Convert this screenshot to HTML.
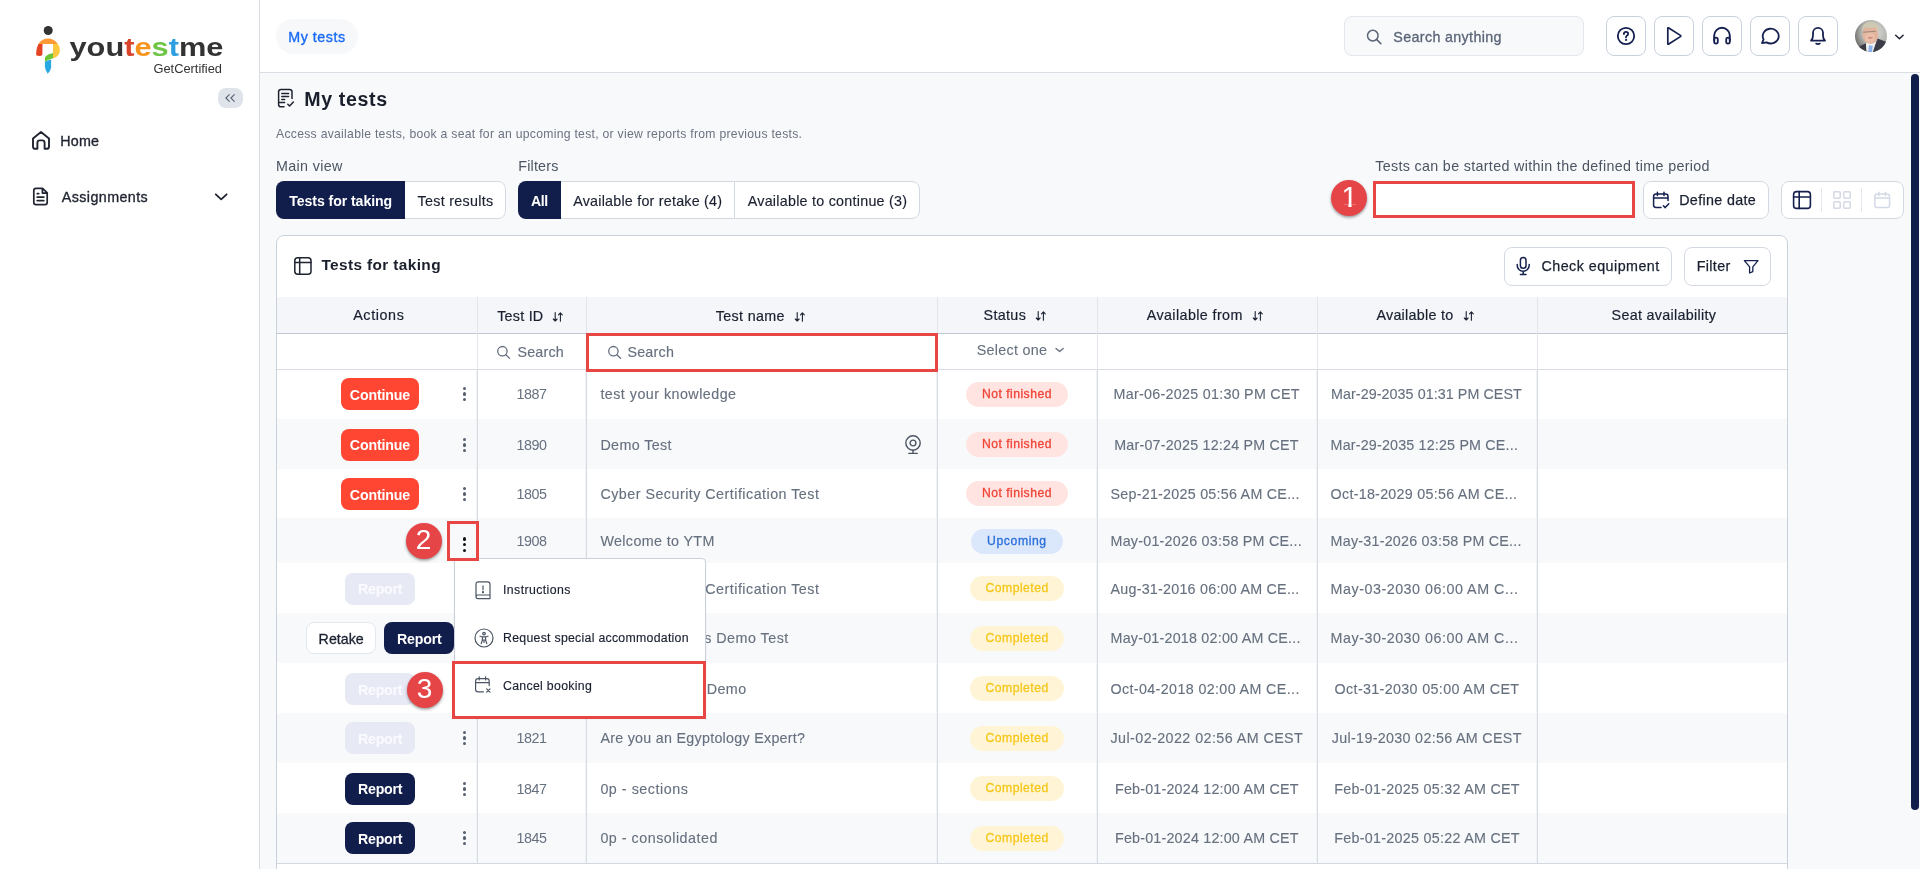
<!DOCTYPE html>
<html lang="en">
<head>
<meta charset="utf-8">
<title>My tests</title>
<style>
*{box-sizing:border-box;margin:0;padding:0}
html,body{width:1920px;height:869px;overflow:hidden;background:#f8f9fb}
body{font-family:"Liberation Sans",Arial,sans-serif;font-size:14px;color:#1f2937;position:relative}
#app{position:absolute;left:0;top:0;width:1920px;height:869px;will-change:transform}
.abs{position:absolute}
.t{position:absolute;white-space:nowrap;line-height:1}
.num{position:absolute;width:36px;height:36px;border-radius:50%;background:#e64548;box-shadow:0 1.5px 3px rgba(0,0,0,.4)}
.redbox{position:absolute;border:3px solid #e84545}
</style>
</head>
<body>
<div id="app">
<div class="abs" style="left:0px;top:0px;width:259px;height:869px;background:#fff"></div>
<div class="abs" style="left:259px;top:0px;width:1px;height:869px;background:#d9dde4"></div>
<div class="abs" style="left:260px;top:0px;width:1660px;height:72px;background:#fff"></div>
<div class="abs" style="left:260px;top:72px;width:1660px;height:1px;background:#d9dde4"></div>
<svg class="abs" style="left:30px;top:20px" width="200" height="60" viewBox="30 20 200 60">
<circle cx="48.2" cy="30.5" r="4.5" fill="#333"/>
<path d="M38.4 43.9 C40.5 40.4 44 38.5 48 38.5 C52 38.5 55.7 40.4 57.7 43.9 Z" fill="#ff9b36"/>
<path d="M38.5 43.9 L42.5 44.1 L42.4 54 Q42.3 55.9 40 55.9 L37.5 55.7 Q36 55.5 36.1 54 Q36.4 47.5 38.5 43.9 Z" fill="#e44424"/>
<path d="M53 43.9 L57.7 43.9 Q59.9 46.5 59.9 50 Q59.8 56.6 53 58.3 Z" fill="#fdc83e"/>
<path d="M53 53 C49 54 45.5 55.5 45 58 L44.9 62 C47.5 60.3 50 59 53 58.3 Z" fill="#6cc635"/>
<path d="M44.9 62 C47 60.8 49 60.2 51.1 59.6 L51.1 67.5 Q50.5 71 47.7 73.7 Q45.3 70.5 44.9 67 Z" fill="#28a8e2"/>
<text x="69.5" y="56.3" font-family="'Liberation Sans',Arial,sans-serif" font-weight="700" font-size="25.5" textLength="154" lengthAdjust="spacingAndGlyphs"><tspan fill="#333">you</tspan><tspan fill="#d9432b">t</tspan><tspan fill="#f7941d">e</tspan><tspan fill="#6cc644">s</tspan><tspan fill="#2d9fe0">t</tspan><tspan fill="#333">me</tspan></text>
<text x="153.5" y="72.6" font-family="'Liberation Sans',Arial,sans-serif" font-size="12.4" fill="#333" textLength="68.5" lengthAdjust="spacingAndGlyphs">GetCertified</text>
</svg>
<div class="abs" style="left:218px;top:88px;width:25px;height:20px;border-radius:8px;background:#dfe3ea"></div>
<svg class="abs" style="left:218px;top:88px" width="25" height="20" viewBox="0 0 25 20" fill="none" stroke="#5b6577" stroke-width="1.1" stroke-linecap="round" stroke-linejoin="round"><path d="M11.3 6.6 L7.9 10 L11.3 13.4 M16.3 6.6 L12.9 10 L16.3 13.4"/></svg>
<svg class="abs" style="left:30px;top:129px" width="22" height="22" viewBox="0 0 22 22" fill="none" stroke="#1f2430" stroke-width="1.9" stroke-linecap="round" stroke-linejoin="round"><path d="M3 9.4 L11 3 L19 9.4 V17.4 Q19 19.8 16.6 19.8 H14.6 V13.8 Q14.6 11.4 12.2 11.4 H9.8 Q7.4 11.4 7.4 13.8 V19.8 H5.4 Q3 19.8 3 17.4 Z"/></svg>
<div class="t" style="left:60.3px;top:133.9px;font-size:14.3px;color:#1f2430;letter-spacing:0.18px;-webkit-text-stroke:0.35px #1f2430;">Home</div>
<svg class="abs" style="left:30px;top:185px" width="22" height="22" viewBox="0 0 22 22" fill="none" stroke="#1f2430" stroke-width="1.7" stroke-linecap="round" stroke-linejoin="round"><path d="M6 3.3 H12.6 L17.2 7.9 V17.4 Q17.2 19.6 15 19.6 H6 Q3.8 19.6 3.8 17.4 V5.5 Q3.8 3.3 6 3.3 Z M12.4 3.5 V8.1 H17 M7.2 12.2 H13.8 M7.2 15.6 H13.8 M7.2 8.6 H8.8"/></svg>
<div class="t" style="left:61.8px;top:189.9px;font-size:14.3px;color:#1f2430;letter-spacing:0.41px;-webkit-text-stroke:0.35px #1f2430;">Assignments</div>
<svg class="abs" style="left:212px;top:188px" width="18" height="18" viewBox="0 0 18 18" fill="none" stroke="#1f2430" stroke-width="1.8" stroke-linecap="round" stroke-linejoin="round"><path d="M3.8 6.3 L9.2 11.4 L14.6 6.3"/></svg>
<div class="abs" style="left:276px;top:19px;width:82px;height:35px;border-radius:18px;background:#f7f8fa"></div>
<div class="t" style="left:288.2px;top:29.9px;font-size:14.3px;color:#1a6cf5;letter-spacing:0.54px;-webkit-text-stroke:0.35px #1a6cf5;">My tests</div>
<div class="abs" style="left:1344px;top:16px;width:240px;height:40px;border:1px solid #e3e7ee;border-radius:8px;background:#f8f9fb"></div>
<svg class="abs" style="left:1365px;top:27px" width="18" height="18" viewBox="0 0 18 18" fill="none" stroke="#5b6577" stroke-width="1.5" stroke-linecap="round" stroke-linejoin="round"><circle cx="7.8" cy="8.6" r="5.3"/><path d="M11.8 12.6 L15.8 16.6"/></svg>
<div class="t" style="left:1393.3px;top:29.5px;font-size:14.3px;color:#5b6577;letter-spacing:0.35px;-webkit-text-stroke:0.3px #5b6577;">Search anything</div>
<div class="abs" style="left:1606px;top:16px;width:40px;height:40px;border:1px solid #c9d1de;border-radius:8px;background:#fff"></div>
<svg class="abs" style="left:1616px;top:26px" width="20" height="20" viewBox="0 0 20 20" fill="none" stroke="#15204f" stroke-width="1.8" stroke-linecap="round" stroke-linejoin="round"><circle cx="10" cy="10" r="8.2"/><path d="M7.9 8 Q7.9 5.9 10 5.9 Q12.1 5.9 12.1 7.8 Q12.1 9.2 10.8 9.8 Q10 10.2 10 11.4"/><circle cx="10" cy="13.9" r=".6" fill="#15204f" stroke-width="1"/></svg>
<div class="abs" style="left:1654px;top:16px;width:40px;height:40px;border:1px solid #c9d1de;border-radius:8px;background:#fff"></div>
<svg class="abs" style="left:1664px;top:26px" width="20" height="20" viewBox="0 0 20 20" fill="none" stroke="#15204f" stroke-width="1.7" stroke-linecap="round" stroke-linejoin="round"><path d="M3.8 2.6 Q3.8 1.4 4.8 2 L16.4 9.4 Q17.2 10 16.4 10.6 L4.8 18 Q3.8 18.6 3.8 17.4 Z"/></svg>
<div class="abs" style="left:1702px;top:16px;width:40px;height:40px;border:1px solid #c9d1de;border-radius:8px;background:#fff"></div>
<svg class="abs" style="left:1712px;top:26px" width="20" height="20" viewBox="0 0 20 20" fill="none" stroke="#15204f" stroke-width="1.8" stroke-linecap="round" stroke-linejoin="round"><path d="M2.2 14.5 V9.6 A7.8 7.8 0 0 1 17.8 9.6 V14.5" stroke-width="1.9"/><rect x="2.2" y="11.6" width="3.6" height="6" rx="1.8"/><rect x="14.2" y="11.6" width="3.6" height="6" rx="1.8"/></svg>
<div class="abs" style="left:1750px;top:16px;width:40px;height:40px;border:1px solid #c9d1de;border-radius:8px;background:#fff"></div>
<svg class="abs" style="left:1760px;top:26px" width="20" height="20" viewBox="0 0 20 20" fill="none" stroke="#15204f" stroke-width="1.8" stroke-linecap="round" stroke-linejoin="round"><path d="M2 17.2 L3.6 13.4 A8 7.4 0 1 1 6.6 16.4 Z"/></svg>
<div class="abs" style="left:1798px;top:16px;width:40px;height:40px;border:1px solid #c9d1de;border-radius:8px;background:#fff"></div>
<svg class="abs" style="left:1808px;top:26px" width="20" height="20" viewBox="0 0 20 20" fill="none" stroke="#15204f" stroke-width="1.8" stroke-linecap="round" stroke-linejoin="round"><path d="M3 14.6 Q5 12.6 5 9.4 V6.8 A5 5 0 0 1 15 6.8 V9.4 Q15 12.6 17 14.6 Z"/><path d="M8.2 17.6 Q10 18.8 11.8 17.6"/></svg>
<svg class="abs" style="left:1854.5px;top:20px" width="32" height="32" viewBox="0 0 32 32">
<defs>
<radialGradient id="avbg" cx="62%" cy="38%" r="75%"><stop offset="0" stop-color="#d9d9d5"/><stop offset=".55" stop-color="#b4b4b0"/><stop offset="1" stop-color="#565654"/></radialGradient>
<clipPath id="avc"><circle cx="16" cy="16" r="16"/></clipPath>
<filter id="avb" x="-10%" y="-10%" width="120%" height="120%"><feGaussianBlur stdDeviation=".45"/></filter>
</defs>
<g clip-path="url(#avc)">
<rect width="32" height="32" fill="url(#avbg)"/>
<g filter="url(#avb)">
<path d="M-1 29 L4.3 26.5 L10.9 23.3 L12 33 L-1 33 Z" fill="#3a3b45"/>
<path d="M17 33 L22.6 18.6 L30.4 21.4 L33 23 L33 33 Z" fill="#3d3e48"/>
<path d="M10.9 23.3 L21.4 20.6 L17.6 33 L11.6 33 Z" fill="#f1f1f4"/>
<path d="M13.9 25.2 L17.8 25.8 L16.9 33 L13.2 33 Z" fill="#8db3e8"/>
<ellipse cx="15.4" cy="14.6" rx="7.9" ry="9.4" fill="#e2b49c"/>
<ellipse cx="14.8" cy="17.6" rx="5" ry="5" fill="#e9bfa9"/>
<path d="M7 12.6 Q6.2 4.6 12 2.6 Q17.5 .8 21.6 4 Q24.8 6.8 23.8 13.2 Q22.6 9 20.6 7.2 Q15 8.6 9.4 7.6 Q7.6 9.6 7 12.6 Z" fill="#cfc8b2"/>
<path d="M8.2 12.2 L20.8 11.3" stroke="#6d6560" stroke-width=".6" fill="none"/>
<path d="M13.2 17.6 Q15.2 18.8 17.4 17.4" stroke="#c4665c" stroke-width="1" fill="none"/>
</g>
</g>
</svg>
<svg class="abs" style="left:1892px;top:31px" width="14" height="12" viewBox="0 0 14 12" fill="none" stroke="#1f2430" stroke-width="1.5" stroke-linecap="round" stroke-linejoin="round"><path d="M3.7 4.3 L7.4 7.7 L11.1 4.3"/></svg>
<svg class="abs" style="left:276px;top:87px" width="20" height="22" viewBox="0 0 20 22" fill="none" stroke="#1f2430" stroke-width="1.5" stroke-linecap="round" stroke-linejoin="round"><path d="M8 19.8 H5 Q2.6 19.8 2.6 17.4 V5 Q2.6 2.6 5 2.6 H13.6 Q16 2.6 16 5 V11.4"/><path d="M2.8 15.6 H8.6"/><path d="M5.8 6.4 H12.6 M5.8 9.4 H12.6 M5.8 12.4 H8.6"/><path d="M11.8 17.2 L13.6 19 L17.4 15"/></svg>
<div class="t" style="left:304.2px;top:90.0px;font-size:19.6px;color:#1a1f2c;letter-spacing:0.65px;font-weight:700;">My tests</div>
<div class="t" style="left:276.0px;top:128.1px;font-size:12.2px;color:#6b7280;letter-spacing:0.28px;">Access available tests, book a seat for an upcoming test, or view reports from previous tests.</div>
<div class="t" style="left:276.0px;top:158.9px;font-size:14.3px;color:#4b5563;letter-spacing:0.35px;">Main view</div>
<div class="t" style="left:518.2px;top:158.9px;font-size:14.3px;color:#4b5563;letter-spacing:0.21px;">Filters</div>
<div class="abs" style="left:404px;top:181px;width:102px;height:38px;background:#fff;border:1px solid #d3d9e3;border-radius:0 8px 8px 0"></div>
<div class="t" style="left:417.6px;top:193.9px;font-size:14.3px;color:#1a2030;letter-spacing:0.30px;-webkit-text-stroke:0.15px #1a2030;">Test results</div>
<div class="abs" style="left:276px;top:181px;width:129px;height:38px;background:#111d4b;border-radius:8px 0 0 8px"></div>
<div class="t" style="left:289.2px;top:194.1px;font-size:14.1px;color:#fff;letter-spacing:-0.06px;font-weight:700;">Tests for taking</div>
<div class="abs" style="left:560px;top:181px;width:175px;height:38px;background:#fff;border:1px solid #d3d9e3;border-radius:0"></div>
<div class="t" style="left:573.2px;top:193.9px;font-size:14.3px;color:#1a2030;letter-spacing:0.23px;-webkit-text-stroke:0.15px #1a2030;">Available for retake (4)</div>
<div class="abs" style="left:734px;top:181px;width:186px;height:38px;background:#fff;border:1px solid #d3d9e3;border-radius:0 8px 8px 0"></div>
<div class="t" style="left:747.7px;top:193.9px;font-size:14.3px;color:#1a2030;letter-spacing:0.26px;-webkit-text-stroke:0.15px #1a2030;">Available to continue (3)</div>
<div class="abs" style="left:518px;top:181px;width:43px;height:38px;background:#111d4b;border-radius:8px 0 0 8px"></div>
<div class="t" style="left:531.0px;top:194.1px;font-size:14.1px;color:#fff;letter-spacing:-0.41px;font-weight:700;">All</div>
<div class="t" style="left:1375.2px;top:158.9px;font-size:14.3px;color:#4b5563;letter-spacing:0.33px;">Tests can be started within the defined time period</div>
<div class="abs" style="left:1373px;top:181px;width:262px;height:37px;background:#fff;border:3px solid #e84545"></div>
<div class="num" style="left:1331px;top:180px"></div>
<div class="t" style="left:1341.4px;top:182.5px;font-size:29px;color:#fff;clip-path:polygon(0 0,100% 0,100% 22.2px,10.2px 22.2px,10.2px 100%,6.9px 100%,6.9px 22.2px,0 22.2px);">1</div>
<div class="abs" style="left:1643px;top:181px;width:126px;height:38px;border:1px solid #d3d9e3;border-radius:8px;background:#fff"></div>
<svg class="abs" style="left:1651px;top:190px" width="20" height="20" viewBox="0 0 20 20" fill="none" stroke="#15204f" stroke-width="1.5" stroke-linecap="round" stroke-linejoin="round"><path d="M10 17.4 H5 Q2.6 17.4 2.6 15 V6.4 Q2.6 4 5 4 H14.6 Q17 4 17 6.4 V10.6"/><path d="M2.8 8 H16.8 M6.4 2.2 V5.6 M13 2.2 V5.6"/><path d="M12.4 15.8 L14.2 17.6 L17.8 13.8"/></svg>
<div class="t" style="left:1679.2px;top:193.1px;font-size:14.3px;color:#1a2030;letter-spacing:0.35px;-webkit-text-stroke:0.25px #1a2030;">Define date</div>
<div class="abs" style="left:1781px;top:181px;width:123px;height:38px;border:1px solid #d3d9e3;border-radius:8px;background:#fff"></div>
<div class="abs" style="left:1821px;top:188px;width:1px;height:24px;background:#e3e7ee"></div>
<div class="abs" style="left:1861px;top:188px;width:1px;height:24px;background:#e3e7ee"></div>
<svg class="abs" style="left:1792px;top:190px" width="20" height="20" viewBox="0 0 20 20" fill="none" stroke="#15204f" stroke-width="1.6" stroke-linecap="round" stroke-linejoin="round"><rect x="1.6" y="1.6" width="16.8" height="16.8" rx="3"/><path d="M1.6 7 H18.4 M7.2 1.6 V18.4"/></svg>
<svg class="abs" style="left:1832px;top:190px" width="20" height="20" viewBox="0 0 20 20" fill="none" stroke="#d3d9e6" stroke-width="1.5" stroke-linecap="round" stroke-linejoin="round"><rect x="1.8" y="1.8" width="6.4" height="6.4" rx="1"/><rect x="11.8" y="1.8" width="6.4" height="6.4" rx="1"/><rect x="1.8" y="11.8" width="6.4" height="6.4" rx="1"/><rect x="11.8" y="11.8" width="6.4" height="6.4" rx="1"/></svg>
<svg class="abs" style="left:1872px;top:190px" width="20" height="20" viewBox="0 0 20 20" fill="none" stroke="#d3d9e6" stroke-width="1.5" stroke-linecap="round" stroke-linejoin="round"><rect x="2.8" y="4" width="14.8" height="13.6" rx="2.6"/><path d="M3 8 H17.4 M7 2.2 V5.4 M13.4 2.2 V5.4"/></svg>
<div class="abs" style="left:1911px;top:74px;width:8px;height:736px;border-radius:4px;background:#111d4b"></div>
<div class="abs" style="left:276px;top:235px;width:1512px;height:640px;background:#fff;border:1px solid #c9d1db;border-radius:8px 8px 0 0"></div>
<svg class="abs" style="left:292px;top:255px" width="22" height="22" viewBox="0 0 22 22" fill="none" stroke="#1f2430" stroke-width="1.5" stroke-linecap="round" stroke-linejoin="round"><rect x="2.8" y="2.8" width="16.2" height="16.4" rx="3"/><path d="M2.8 7.5 H19 M7.7 2.8 V19.2"/></svg>
<div class="t" style="left:321.4px;top:257.1px;font-size:15.4px;color:#1a1f2c;letter-spacing:0.38px;font-weight:700;">Tests for taking</div>
<div class="abs" style="left:1504px;top:247px;width:168px;height:39px;border:1px solid #d3d9e3;border-radius:8px;background:#fff"></div>
<svg class="abs" style="left:1513px;top:256px" width="20" height="20" viewBox="0 0 20 20" fill="none" stroke="#15204f" stroke-width="1.5" stroke-linecap="round" stroke-linejoin="round"><rect x="7.4" y="1.6" width="5.6" height="10.6" rx="2.8"/><path d="M4.2 8.6 V9.2 A6 6 0 0 0 16.2 9.2 V8.6 M10.2 15.4 V18.2 M7.4 18.4 H13"/></svg>
<div class="t" style="left:1541.5px;top:258.7px;font-size:14.3px;color:#1a2030;letter-spacing:0.46px;-webkit-text-stroke:0.25px #1a2030;">Check equipment</div>
<div class="abs" style="left:1684px;top:247px;width:87px;height:39px;border:1px solid #d3d9e3;border-radius:8px;background:#fff"></div>
<div class="t" style="left:1696.8px;top:258.7px;font-size:14.3px;color:#1a2030;letter-spacing:0.32px;-webkit-text-stroke:0.25px #1a2030;">Filter</div>
<svg class="abs" style="left:1742px;top:257px" width="18" height="18" viewBox="0 0 18 18" fill="none" stroke="#15204f" stroke-width="1.3" stroke-linecap="round" stroke-linejoin="round"><path d="M2.4 3.6 H16 L10.8 9.8 V14.6 L7.6 16 V9.8 Z"/></svg>
<div class="abs" style="left:277px;top:297px;width:1510px;height:36px;background:#f4f6f9"></div>
<div class="abs" style="left:277px;top:419px;width:1510px;height:50px;background:#f8f9fb"></div>
<div class="abs" style="left:277px;top:518px;width:1510px;height:45px;background:#f8f9fb"></div>
<div class="abs" style="left:277px;top:613px;width:1510px;height:50px;background:#f8f9fb"></div>
<div class="abs" style="left:277px;top:713px;width:1510px;height:50px;background:#f8f9fb"></div>
<div class="abs" style="left:277px;top:813px;width:1510px;height:50px;background:#f8f9fb"></div>
<div class="abs" style="left:277px;top:333px;width:1510px;height:1px;background:#bfc9d4"></div>
<div class="abs" style="left:277px;top:369px;width:1510px;height:1px;background:#d8dde4"></div>
<div class="abs" style="left:277px;top:863px;width:1510px;height:1px;background:#d3d9e1"></div>
<div class="abs" style="left:477px;top:297px;width:1px;height:73px;background:#e2e6ec"></div>
<div class="abs" style="left:477px;top:370px;width:1px;height:493px;background:#d6dbe4"></div>
<div class="abs" style="left:476px;top:370px;width:1px;height:493px;background:#f0f2f6"></div>
<div class="abs" style="left:586px;top:297px;width:1px;height:73px;background:#e2e6ec"></div>
<div class="abs" style="left:586px;top:370px;width:1px;height:493px;background:#d6dbe4"></div>
<div class="abs" style="left:585px;top:370px;width:1px;height:493px;background:#f0f2f6"></div>
<div class="abs" style="left:937px;top:297px;width:1px;height:73px;background:#e2e6ec"></div>
<div class="abs" style="left:937px;top:370px;width:1px;height:493px;background:#d6dbe4"></div>
<div class="abs" style="left:936px;top:370px;width:1px;height:493px;background:#f0f2f6"></div>
<div class="abs" style="left:1097px;top:297px;width:1px;height:73px;background:#e2e6ec"></div>
<div class="abs" style="left:1097px;top:370px;width:1px;height:493px;background:#d6dbe4"></div>
<div class="abs" style="left:1096px;top:370px;width:1px;height:493px;background:#f0f2f6"></div>
<div class="abs" style="left:1317px;top:297px;width:1px;height:73px;background:#e2e6ec"></div>
<div class="abs" style="left:1317px;top:370px;width:1px;height:493px;background:#d6dbe4"></div>
<div class="abs" style="left:1316px;top:370px;width:1px;height:493px;background:#f0f2f6"></div>
<div class="abs" style="left:1537px;top:297px;width:1px;height:73px;background:#e2e6ec"></div>
<div class="abs" style="left:1537px;top:370px;width:1px;height:493px;background:#d6dbe4"></div>
<div class="abs" style="left:1536px;top:370px;width:1px;height:493px;background:#f0f2f6"></div>
<div class="t" style="left:353.2px;top:308.1px;font-size:14.3px;color:#1a2030;letter-spacing:0.63px;-webkit-text-stroke:0.2px #1a2030;">Actions</div>
<div class="t" style="left:497.2px;top:309.1px;font-size:14.3px;color:#1a2030;letter-spacing:0.25px;-webkit-text-stroke:0.2px #1a2030;">Test ID</div>
<svg class="abs" style="left:552.4px;top:310.5px" width="12" height="12" viewBox="0 0 12 12" fill="none" stroke="#1a2030" stroke-width="1.1" stroke-linecap="round" stroke-linejoin="round"><path d="M3.2 1.6 V9.8 M1.3 8 L3.2 10 L5.1 8 M8.4 10.2 V2 M6.5 3.8 L8.4 1.8 L10.3 3.8"/></svg>
<div class="t" style="left:715.8px;top:309.1px;font-size:14.3px;color:#1a2030;letter-spacing:0.34px;-webkit-text-stroke:0.2px #1a2030;">Test name</div>
<svg class="abs" style="left:794px;top:310.5px" width="12" height="12" viewBox="0 0 12 12" fill="none" stroke="#1a2030" stroke-width="1.1" stroke-linecap="round" stroke-linejoin="round"><path d="M3.2 1.6 V9.8 M1.3 8 L3.2 10 L5.1 8 M8.4 10.2 V2 M6.5 3.8 L8.4 1.8 L10.3 3.8"/></svg>
<div class="t" style="left:983.5px;top:308.1px;font-size:14.3px;color:#1a2030;letter-spacing:0.35px;-webkit-text-stroke:0.2px #1a2030;">Status</div>
<svg class="abs" style="left:1035.4px;top:309.5px" width="12" height="12" viewBox="0 0 12 12" fill="none" stroke="#1a2030" stroke-width="1.1" stroke-linecap="round" stroke-linejoin="round"><path d="M3.2 1.6 V9.8 M1.3 8 L3.2 10 L5.1 8 M8.4 10.2 V2 M6.5 3.8 L8.4 1.8 L10.3 3.8"/></svg>
<div class="t" style="left:1146.8px;top:308.1px;font-size:14.3px;color:#1a2030;letter-spacing:0.40px;-webkit-text-stroke:0.2px #1a2030;">Available from</div>
<svg class="abs" style="left:1252px;top:309.5px" width="12" height="12" viewBox="0 0 12 12" fill="none" stroke="#1a2030" stroke-width="1.1" stroke-linecap="round" stroke-linejoin="round"><path d="M3.2 1.6 V9.8 M1.3 8 L3.2 10 L5.1 8 M8.4 10.2 V2 M6.5 3.8 L8.4 1.8 L10.3 3.8"/></svg>
<div class="t" style="left:1376.4px;top:308.1px;font-size:14.3px;color:#1a2030;letter-spacing:0.28px;-webkit-text-stroke:0.2px #1a2030;">Available to</div>
<svg class="abs" style="left:1462.6px;top:309.5px" width="12" height="12" viewBox="0 0 12 12" fill="none" stroke="#1a2030" stroke-width="1.1" stroke-linecap="round" stroke-linejoin="round"><path d="M3.2 1.6 V9.8 M1.3 8 L3.2 10 L5.1 8 M8.4 10.2 V2 M6.5 3.8 L8.4 1.8 L10.3 3.8"/></svg>
<div class="t" style="left:1611.6px;top:308.1px;font-size:14.3px;color:#1a2030;letter-spacing:0.31px;-webkit-text-stroke:0.2px #1a2030;">Seat availability</div>
<svg class="abs" style="left:496.4px;top:344px" width="16" height="16" viewBox="0 0 16 16" fill="none" stroke="#66707f" stroke-width="1.3" stroke-linecap="round" stroke-linejoin="round"><circle cx="6.4" cy="7.2" r="4.7"/><path d="M9.9 10.7 L13.6 14.4"/></svg>
<div class="t" style="left:517.5px;top:344.9px;font-size:14.3px;color:#66707f;letter-spacing:0.18px;-webkit-text-stroke:0.15px #66707f;">Search</div>
<svg class="abs" style="left:606.8px;top:344px" width="16" height="16" viewBox="0 0 16 16" fill="none" stroke="#66707f" stroke-width="1.3" stroke-linecap="round" stroke-linejoin="round"><circle cx="6.4" cy="7.2" r="4.7"/><path d="M9.9 10.7 L13.6 14.4"/></svg>
<div class="t" style="left:627.4px;top:344.9px;font-size:14.3px;color:#66707f;letter-spacing:0.24px;-webkit-text-stroke:0.15px #66707f;">Search</div>
<div class="t" style="left:976.8px;top:343.1px;font-size:14.3px;color:#66707f;letter-spacing:0.29px;-webkit-text-stroke:0.1px #66707f;">Select one</div>
<svg class="abs" style="left:1053px;top:344px" width="14" height="12" viewBox="0 0 14 12" fill="none" stroke="#66707f" stroke-width="1.3" stroke-linecap="round" stroke-linejoin="round"><path d="M3 4.4 L6.6 7.6 L10.2 4.4"/></svg>
<div class="redbox" style="left:586px;top:333px;width:352px;height:39px"></div>
<div class="abs" style="left:341px;top:378px;width:78px;height:32px;background:#ff4633;border-radius:8px"></div>
<div class="t" style="left:349.8px;top:387.5px;font-size:14.2px;color:#fff;letter-spacing:-0.16px;font-weight:700;">Continue</div>
<div class="abs" style="left:462.55px;top:386.55px;width:3.5px;height:3.5px;border-radius:50%;background:#55606f"></div>
<div class="abs" style="left:462.55px;top:392.25px;width:3.5px;height:3.5px;border-radius:50%;background:#55606f"></div>
<div class="abs" style="left:462.55px;top:397.95px;width:3.5px;height:3.5px;border-radius:50%;background:#55606f"></div>
<div class="t" style="left:516.6px;top:387.3px;font-size:14.3px;color:#66707f;letter-spacing:-0.50px;">1887</div>
<div class="t" style="left:600.4px;top:387.3px;font-size:14.3px;color:#66707f;letter-spacing:0.47px;-webkit-text-stroke:0.12px #66707f;">test your knowledge</div>
<div class="abs" style="left:966px;top:382px;width:102px;height:25px;border-radius:13px;background:#ffe4e1"></div>
<div class="t" style="left:982.0px;top:387.9px;font-size:12.2px;color:#f04438;letter-spacing:0.46px;-webkit-text-stroke:0.3px #f04438;">Not finished</div>
<div class="t" style="left:1113.5px;top:387.3px;font-size:14.3px;color:#66707f;letter-spacing:0.28px;-webkit-text-stroke:0.12px #66707f;">Mar-06-2025 01:30 PM CET</div>
<div class="t" style="left:1331.0px;top:387.3px;font-size:14.3px;color:#66707f;letter-spacing:0.07px;-webkit-text-stroke:0.12px #66707f;">Mar-29-2035 01:31 PM CEST</div>
<div class="abs" style="left:341px;top:429px;width:78px;height:32px;background:#ff4633;border-radius:8px"></div>
<div class="t" style="left:349.8px;top:438.4px;font-size:14.2px;color:#fff;letter-spacing:-0.16px;font-weight:700;">Continue</div>
<div class="abs" style="left:462.55px;top:437.55px;width:3.5px;height:3.5px;border-radius:50%;background:#55606f"></div>
<div class="abs" style="left:462.55px;top:443.25px;width:3.5px;height:3.5px;border-radius:50%;background:#55606f"></div>
<div class="abs" style="left:462.55px;top:448.95px;width:3.5px;height:3.5px;border-radius:50%;background:#55606f"></div>
<div class="t" style="left:516.6px;top:437.6px;font-size:14.3px;color:#66707f;letter-spacing:-0.50px;">1890</div>
<div class="t" style="left:600.4px;top:437.6px;font-size:14.3px;color:#66707f;letter-spacing:0.38px;-webkit-text-stroke:0.12px #66707f;">Demo Test</div>
<div class="abs" style="left:966px;top:432px;width:102px;height:25px;border-radius:13px;background:#ffe4e1"></div>
<div class="t" style="left:982.0px;top:437.9px;font-size:12.2px;color:#f04438;letter-spacing:0.46px;-webkit-text-stroke:0.3px #f04438;">Not finished</div>
<div class="t" style="left:1114.2px;top:437.6px;font-size:14.3px;color:#66707f;letter-spacing:0.21px;-webkit-text-stroke:0.12px #66707f;">Mar-07-2025 12:24 PM CET</div>
<div class="t" style="left:1330.6px;top:437.6px;font-size:14.3px;color:#66707f;letter-spacing:0.18px;-webkit-text-stroke:0.12px #66707f;">Mar-29-2035 12:25 PM CE...</div>
<div class="abs" style="left:341px;top:478px;width:78px;height:32px;background:#ff4633;border-radius:8px"></div>
<div class="t" style="left:349.8px;top:487.9px;font-size:14.2px;color:#fff;letter-spacing:-0.16px;font-weight:700;">Continue</div>
<div class="abs" style="left:462.55px;top:486.55px;width:3.5px;height:3.5px;border-radius:50%;background:#55606f"></div>
<div class="abs" style="left:462.55px;top:492.25px;width:3.5px;height:3.5px;border-radius:50%;background:#55606f"></div>
<div class="abs" style="left:462.55px;top:497.95px;width:3.5px;height:3.5px;border-radius:50%;background:#55606f"></div>
<div class="t" style="left:516.6px;top:487.0px;font-size:14.3px;color:#66707f;letter-spacing:-0.50px;">1805</div>
<div class="t" style="left:600.4px;top:487.0px;font-size:14.3px;color:#66707f;letter-spacing:0.48px;-webkit-text-stroke:0.12px #66707f;">Cyber Security Certification Test</div>
<div class="abs" style="left:966px;top:481px;width:102px;height:25px;border-radius:13px;background:#ffe4e1"></div>
<div class="t" style="left:982.0px;top:486.9px;font-size:12.2px;color:#f04438;letter-spacing:0.46px;-webkit-text-stroke:0.3px #f04438;">Not finished</div>
<div class="t" style="left:1110.5px;top:487.0px;font-size:14.3px;color:#66707f;letter-spacing:0.25px;-webkit-text-stroke:0.12px #66707f;">Sep-21-2025 05:56 AM CE...</div>
<div class="t" style="left:1330.6px;top:487.0px;font-size:14.3px;color:#66707f;letter-spacing:0.27px;-webkit-text-stroke:0.12px #66707f;">Oct-18-2029 05:56 AM CE...</div>
<div class="abs" style="left:462.55px;top:537.15px;width:3.5px;height:3.5px;border-radius:50%;background:#111"></div>
<div class="abs" style="left:462.55px;top:542.85px;width:3.5px;height:3.5px;border-radius:50%;background:#111"></div>
<div class="abs" style="left:462.55px;top:548.55px;width:3.5px;height:3.5px;border-radius:50%;background:#111"></div>
<div class="t" style="left:516.6px;top:534.2px;font-size:14.3px;color:#66707f;letter-spacing:-0.50px;">1908</div>
<div class="t" style="left:600.4px;top:534.2px;font-size:14.3px;color:#66707f;letter-spacing:0.37px;-webkit-text-stroke:0.12px #66707f;">Welcome to YTM</div>
<div class="abs" style="left:971px;top:529px;width:92px;height:25px;border-radius:13px;background:#dbe7fb"></div>
<div class="t" style="left:987.0px;top:534.9px;font-size:12.2px;color:#2a6fdb;letter-spacing:0.61px;-webkit-text-stroke:0.3px #2a6fdb;">Upcoming</div>
<div class="t" style="left:1110.5px;top:534.2px;font-size:14.3px;color:#66707f;letter-spacing:0.24px;-webkit-text-stroke:0.12px #66707f;">May-01-2026 03:58 PM CE...</div>
<div class="t" style="left:1330.6px;top:534.2px;font-size:14.3px;color:#66707f;letter-spacing:0.23px;-webkit-text-stroke:0.12px #66707f;">May-31-2026 03:58 PM CE...</div>
<div class="abs" style="left:345px;top:573px;width:70px;height:32px;background:#e7e9f5;border-radius:8px"></div>
<div class="t" style="left:358.0px;top:582.3px;font-size:14.2px;color:#fbfbff;letter-spacing:-0.23px;font-weight:700;">Report</div>
<div class="abs" style="left:462.55px;top:581.55px;width:3.5px;height:3.5px;border-radius:50%;background:#55606f"></div>
<div class="abs" style="left:462.55px;top:587.25px;width:3.5px;height:3.5px;border-radius:50%;background:#55606f"></div>
<div class="abs" style="left:462.55px;top:592.95px;width:3.5px;height:3.5px;border-radius:50%;background:#55606f"></div>
<div class="t" style="left:516.6px;top:581.8px;font-size:14.3px;color:#66707f;letter-spacing:-0.50px;">1810</div>
<div class="t" style="left:600.4px;top:581.8px;font-size:14.3px;color:#66707f;letter-spacing:0.48px;-webkit-text-stroke:0.12px #66707f;">Cyber Security Certification Test</div>
<div class="abs" style="left:970px;top:576px;width:94px;height:25px;border-radius:13px;background:#fff5d6"></div>
<div class="t" style="left:985.6px;top:581.9px;font-size:12.2px;color:#f6c71a;letter-spacing:0.46px;-webkit-text-stroke:0.3px #f6c71a;">Completed</div>
<div class="t" style="left:1110.5px;top:581.8px;font-size:14.3px;color:#66707f;letter-spacing:0.24px;-webkit-text-stroke:0.12px #66707f;">Aug-31-2016 06:00 AM CE...</div>
<div class="t" style="left:1330.6px;top:581.8px;font-size:14.3px;color:#66707f;letter-spacing:0.52px;-webkit-text-stroke:0.12px #66707f;">May-03-2030 06:00 AM C...</div>
<div class="abs" style="left:306px;top:622px;width:70px;height:32px;background:#fff;border-radius:8px;border:1px solid #e3e7ee"></div>
<div class="t" style="left:318.6px;top:631.8px;font-size:14.2px;color:#1a2030;letter-spacing:0.04px;-webkit-text-stroke:0.3px #1a2030;">Retake</div>
<div class="abs" style="left:384px;top:622px;width:70px;height:32px;background:#111d4b;border-radius:8px"></div>
<div class="t" style="left:397.0px;top:631.8px;font-size:14.2px;color:#fff;letter-spacing:-0.19px;font-weight:700;">Report</div>
<div class="abs" style="left:462.55px;top:630.55px;width:3.5px;height:3.5px;border-radius:50%;background:#55606f"></div>
<div class="abs" style="left:462.55px;top:636.25px;width:3.5px;height:3.5px;border-radius:50%;background:#55606f"></div>
<div class="abs" style="left:462.55px;top:641.95px;width:3.5px;height:3.5px;border-radius:50%;background:#55606f"></div>
<div class="t" style="left:516.6px;top:631.1px;font-size:14.3px;color:#66707f;letter-spacing:-0.50px;">1806</div>
<div class="t" style="left:600.4px;top:631.1px;font-size:14.3px;color:#66707f;letter-spacing:0.49px;-webkit-text-stroke:0.12px #66707f;">Business Basics Demo Test</div>
<div class="abs" style="left:970px;top:626px;width:94px;height:25px;border-radius:13px;background:#fff5d6"></div>
<div class="t" style="left:985.6px;top:631.9px;font-size:12.2px;color:#f6c71a;letter-spacing:0.46px;-webkit-text-stroke:0.3px #f6c71a;">Completed</div>
<div class="t" style="left:1110.5px;top:631.1px;font-size:14.3px;color:#66707f;letter-spacing:0.22px;-webkit-text-stroke:0.12px #66707f;">May-01-2018 02:00 AM CE...</div>
<div class="t" style="left:1330.6px;top:631.1px;font-size:14.3px;color:#66707f;letter-spacing:0.52px;-webkit-text-stroke:0.12px #66707f;">May-30-2030 06:00 AM C...</div>
<div class="abs" style="left:345px;top:673px;width:70px;height:32px;background:#e7e9f5;border-radius:8px"></div>
<div class="t" style="left:358.0px;top:682.5px;font-size:14.2px;color:#fbfbff;letter-spacing:-0.23px;font-weight:700;">Report</div>
<div class="abs" style="left:462.55px;top:681.55px;width:3.5px;height:3.5px;border-radius:50%;background:#55606f"></div>
<div class="abs" style="left:462.55px;top:687.25px;width:3.5px;height:3.5px;border-radius:50%;background:#55606f"></div>
<div class="abs" style="left:462.55px;top:692.95px;width:3.5px;height:3.5px;border-radius:50%;background:#55606f"></div>
<div class="t" style="left:516.6px;top:681.7px;font-size:14.3px;color:#66707f;letter-spacing:-0.50px;">1807</div>
<div class="t" style="left:600.4px;top:681.7px;font-size:14.3px;color:#66707f;letter-spacing:0.46px;-webkit-text-stroke:0.12px #66707f;">General Safety Demo</div>
<div class="abs" style="left:970px;top:676px;width:94px;height:25px;border-radius:13px;background:#fff5d6"></div>
<div class="t" style="left:985.6px;top:681.9px;font-size:12.2px;color:#f6c71a;letter-spacing:0.46px;-webkit-text-stroke:0.3px #f6c71a;">Completed</div>
<div class="t" style="left:1110.5px;top:681.7px;font-size:14.3px;color:#66707f;letter-spacing:0.37px;-webkit-text-stroke:0.12px #66707f;">Oct-04-2018 02:00 AM CE...</div>
<div class="t" style="left:1334.6px;top:681.7px;font-size:14.3px;color:#66707f;letter-spacing:0.35px;-webkit-text-stroke:0.12px #66707f;">Oct-31-2030 05:00 AM CET</div>
<div class="abs" style="left:345px;top:722px;width:70px;height:32px;background:#e7e9f5;border-radius:8px"></div>
<div class="t" style="left:358.0px;top:732.0px;font-size:14.2px;color:#fbfbff;letter-spacing:-0.23px;font-weight:700;">Report</div>
<div class="abs" style="left:462.55px;top:730.55px;width:3.5px;height:3.5px;border-radius:50%;background:#55606f"></div>
<div class="abs" style="left:462.55px;top:736.25px;width:3.5px;height:3.5px;border-radius:50%;background:#55606f"></div>
<div class="abs" style="left:462.55px;top:741.95px;width:3.5px;height:3.5px;border-radius:50%;background:#55606f"></div>
<div class="t" style="left:516.6px;top:731.2px;font-size:14.3px;color:#66707f;letter-spacing:-0.50px;">1821</div>
<div class="t" style="left:600.4px;top:731.2px;font-size:14.3px;color:#66707f;letter-spacing:0.27px;-webkit-text-stroke:0.12px #66707f;">Are you an Egyptology Expert?</div>
<div class="abs" style="left:970px;top:726px;width:94px;height:25px;border-radius:13px;background:#fff5d6"></div>
<div class="t" style="left:985.6px;top:731.9px;font-size:12.2px;color:#f6c71a;letter-spacing:0.46px;-webkit-text-stroke:0.3px #f6c71a;">Completed</div>
<div class="t" style="left:1110.5px;top:731.2px;font-size:14.3px;color:#66707f;letter-spacing:0.43px;-webkit-text-stroke:0.12px #66707f;">Jul-02-2022 02:56 AM CEST</div>
<div class="t" style="left:1331.8px;top:731.2px;font-size:14.3px;color:#66707f;letter-spacing:0.32px;-webkit-text-stroke:0.12px #66707f;">Jul-19-2030 02:56 AM CEST</div>
<div class="abs" style="left:345px;top:773px;width:70px;height:32px;background:#111d4b;border-radius:8px"></div>
<div class="t" style="left:358.0px;top:782.3px;font-size:14.2px;color:#fff;letter-spacing:-0.23px;font-weight:700;">Report</div>
<div class="abs" style="left:462.55px;top:781.55px;width:3.5px;height:3.5px;border-radius:50%;background:#55606f"></div>
<div class="abs" style="left:462.55px;top:787.25px;width:3.5px;height:3.5px;border-radius:50%;background:#55606f"></div>
<div class="abs" style="left:462.55px;top:792.95px;width:3.5px;height:3.5px;border-radius:50%;background:#55606f"></div>
<div class="t" style="left:516.6px;top:781.7px;font-size:14.3px;color:#66707f;letter-spacing:-0.50px;">1847</div>
<div class="t" style="left:600.4px;top:781.7px;font-size:14.3px;color:#66707f;letter-spacing:0.53px;-webkit-text-stroke:0.12px #66707f;">0p - sections</div>
<div class="abs" style="left:970px;top:776px;width:94px;height:25px;border-radius:13px;background:#fff5d6"></div>
<div class="t" style="left:985.6px;top:781.9px;font-size:12.2px;color:#f6c71a;letter-spacing:0.46px;-webkit-text-stroke:0.3px #f6c71a;">Completed</div>
<div class="t" style="left:1115.0px;top:781.7px;font-size:14.3px;color:#66707f;letter-spacing:0.20px;-webkit-text-stroke:0.12px #66707f;">Feb-01-2024 12:00 AM CET</div>
<div class="t" style="left:1334.3px;top:781.7px;font-size:14.3px;color:#66707f;letter-spacing:0.28px;-webkit-text-stroke:0.12px #66707f;">Feb-01-2025 05:32 AM CET</div>
<div class="abs" style="left:345px;top:822px;width:70px;height:32px;background:#111d4b;border-radius:8px"></div>
<div class="t" style="left:358.0px;top:831.9px;font-size:14.2px;color:#fff;letter-spacing:-0.23px;font-weight:700;">Report</div>
<div class="abs" style="left:462.55px;top:830.55px;width:3.5px;height:3.5px;border-radius:50%;background:#55606f"></div>
<div class="abs" style="left:462.55px;top:836.25px;width:3.5px;height:3.5px;border-radius:50%;background:#55606f"></div>
<div class="abs" style="left:462.55px;top:841.95px;width:3.5px;height:3.5px;border-radius:50%;background:#55606f"></div>
<div class="t" style="left:516.6px;top:830.9px;font-size:14.3px;color:#66707f;letter-spacing:-0.50px;">1845</div>
<div class="t" style="left:600.4px;top:830.9px;font-size:14.3px;color:#66707f;letter-spacing:0.51px;-webkit-text-stroke:0.12px #66707f;">0p - consolidated</div>
<div class="abs" style="left:970px;top:826px;width:94px;height:25px;border-radius:13px;background:#fff5d6"></div>
<div class="t" style="left:985.6px;top:831.9px;font-size:12.2px;color:#f6c71a;letter-spacing:0.46px;-webkit-text-stroke:0.3px #f6c71a;">Completed</div>
<div class="t" style="left:1115.0px;top:830.9px;font-size:14.3px;color:#66707f;letter-spacing:0.20px;-webkit-text-stroke:0.12px #66707f;">Feb-01-2024 12:00 AM CET</div>
<div class="t" style="left:1334.3px;top:830.9px;font-size:14.3px;color:#66707f;letter-spacing:0.28px;-webkit-text-stroke:0.12px #66707f;">Feb-01-2025 05:22 AM CET</div>
<svg class="abs" style="left:903px;top:434px" width="20" height="22" viewBox="0 0 20 22" fill="none" stroke="#4b5563" stroke-width="1.4" stroke-linecap="round" stroke-linejoin="round"><circle cx="10" cy="9" r="7.2"/><circle cx="10" cy="9" r="2.9"/><path d="M10 16.2 V19 M5.8 19.4 H14.2"/></svg>
<div class="abs" style="left:454px;top:558px;width:252px;height:160px;background:#fff;border:1px solid #c9d0db;border-radius:4px;box-shadow:0 1px 3px rgba(16,24,40,.05)"></div>
<svg class="abs" style="left:473px;top:579px" width="20" height="22" viewBox="0 0 20 22" fill="none" stroke="#4b5563" stroke-width="1.2" stroke-linecap="round" stroke-linejoin="round"><path d="M3 17.4 V5.2 Q3 2.8 5.4 2.8 H14.6 Q17 2.8 17 5.2 V16 H5 Q3 16 3 17.8 Q3 19.6 5 19.6 H17 V16"/><path d="M10 6.8 V10.8"/><circle cx="10" cy="13.2" r=".5" fill="#4b5563"/></svg>
<div class="t" style="left:503.0px;top:583.6px;font-size:12.3px;color:#1a2030;letter-spacing:0.41px;-webkit-text-stroke:0.15px #1a2030;">Instructions</div>
<svg class="abs" style="left:473px;top:627px" width="22" height="22" viewBox="0 0 22 22" fill="none" stroke="#4b5563" stroke-width="1.2" stroke-linecap="round" stroke-linejoin="round"><circle cx="11" cy="11" r="9"/><circle cx="11" cy="6.6" r="1.3"/><path d="M7 9.2 Q11 10.4 15 9.2 M9.4 10 V13 L8.2 16.6 M12.6 10 V13 L13.8 16.6 M9.6 13 H12.4 M11 13.2 V15.4"/></svg>
<div class="t" style="left:503.0px;top:631.6px;font-size:12.3px;color:#1a2030;letter-spacing:0.28px;-webkit-text-stroke:0.15px #1a2030;">Request special accommodation</div>
<svg class="abs" style="left:473px;top:675px" width="20" height="20" viewBox="0 0 20 20" fill="none" stroke="#4b5563" stroke-width="1.2" stroke-linecap="round" stroke-linejoin="round"><path d="M10.4 16.8 H5 Q2.6 16.8 2.6 14.4 V6 Q2.6 3.6 5 3.6 H13.8 Q16.2 3.6 16.2 6 V10.6"/><path d="M2.8 7.6 H16 M6.2 1.8 V5 M12.6 1.8 V5"/><path d="M13.6 13.8 L17 17.2 M17 13.8 L13.6 17.2"/></svg>
<div class="t" style="left:503.0px;top:679.6px;font-size:12.3px;color:#1a2030;letter-spacing:0.31px;-webkit-text-stroke:0.15px #1a2030;">Cancel booking</div>
<div class="redbox" style="left:452px;top:661px;width:254px;height:58px"></div>
<div class="redbox" style="left:447px;top:521px;width:32px;height:40px"></div>
<div class="num" style="left:406px;top:523px"></div>
<div class="t" style="left:415.7px;top:526.1px;font-size:28px;color:#fff;">2</div>
<div class="num" style="left:407px;top:672px"></div>
<div class="t" style="left:416.8px;top:675.0px;font-size:28px;color:#fff;">3</div>
</div>
</body>
</html>
